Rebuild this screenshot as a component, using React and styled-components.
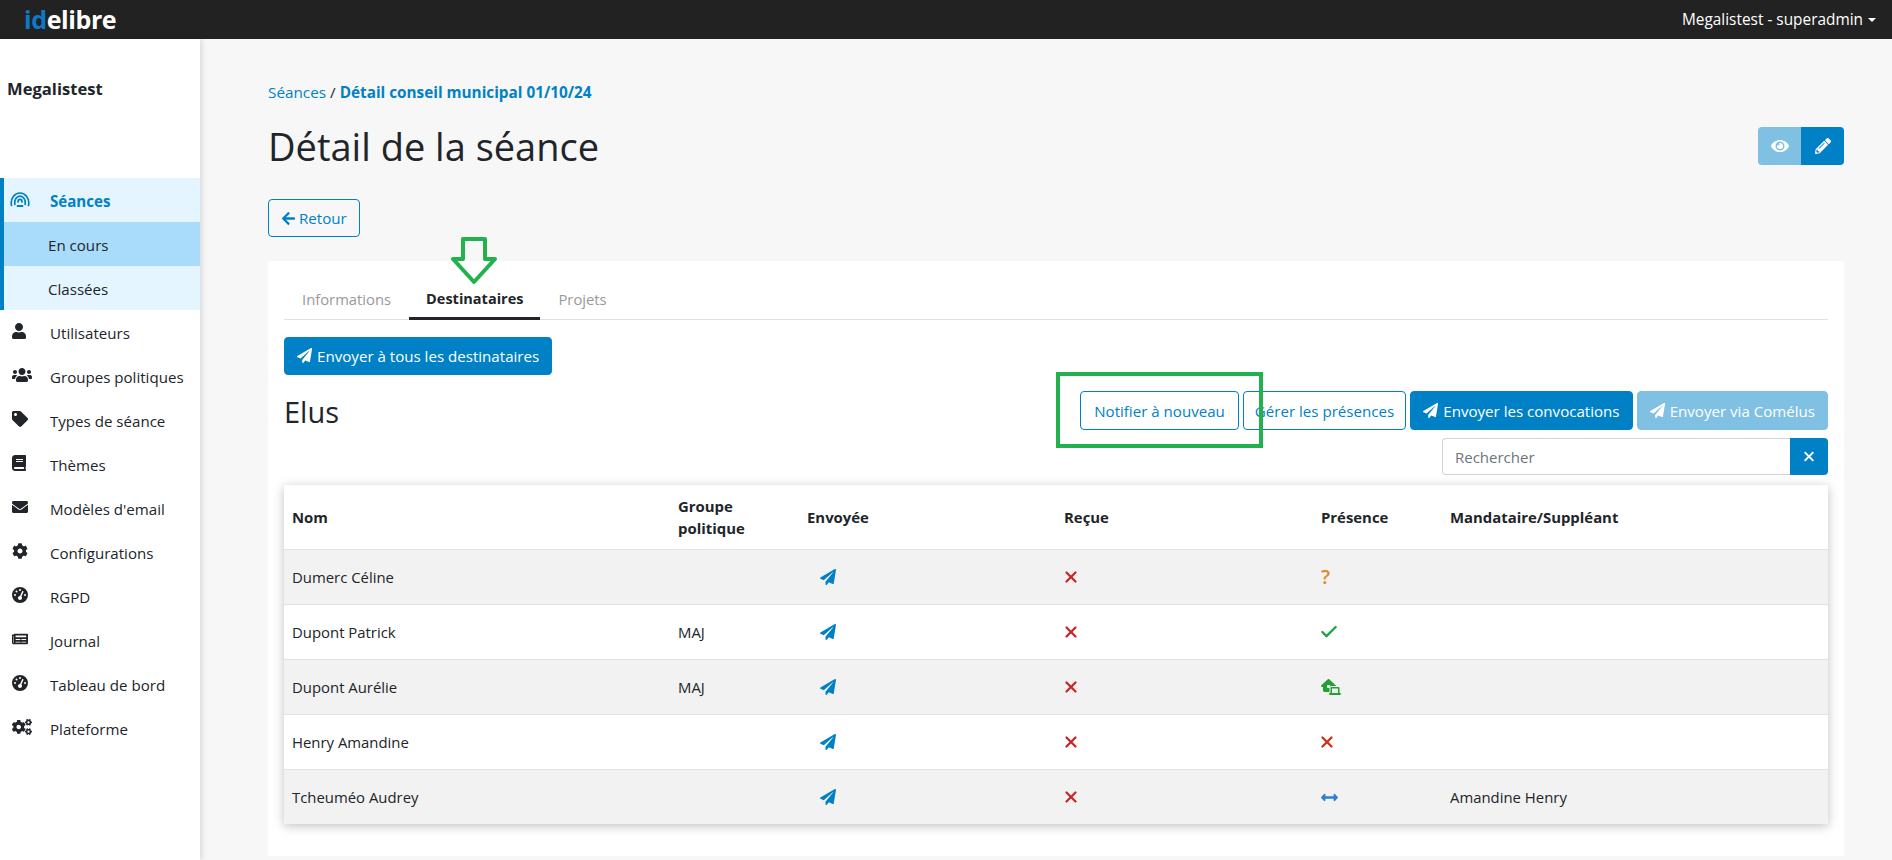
import styled, { createGlobalStyle } from 'styled-components';
import {
  FaUser, FaUsers, FaTag, FaBook, FaEnvelope, FaCog, FaNewspaper, FaCogs,
  FaEye, FaPencilAlt, FaArrowLeft, FaPaperPlane, FaArrowsAltH,
} from 'react-icons/fa';
import { FaHouseLaptop, FaGaugeHigh, FaXmark } from 'react-icons/fa6';
import { Check, X } from 'lucide-react';

const blue = '#0081c6';

const GlobalStyle = createGlobalStyle`
  html, body {
    margin: 0;
    height: 100%;
    overflow: hidden;
    background: #f7f7f7;
    color: #212529;
    font-family: "Open Sans", "Noto Sans", sans-serif;
    font-size: 15px;
  }
  * { box-sizing: border-box; }
`;

const Page = styled.div`
  position: relative;
  height: 860px;
  display: flex;
  flex-direction: column;
`;

const TopBar = styled.header`
  height: 39px;
  flex: none;
  background: #222;
  display: flex;
  align-items: center;
  justify-content: space-between;
  padding: 0 16px 0 24px;
  color: #fff;
`;

const Logo = styled.div`
  font-size: 25px;
  font-weight: 700;
  letter-spacing: -0.4px;
  line-height: 1;
  span { color: #0f78c8; }
`;

const UserMenu = styled.div`
  display: flex;
  align-items: center;
  gap: 5px;
  font-size: 15.4px;
  &::after {
    content: '';
    border-top: 4.5px solid #fff;
    border-left: 4.5px solid transparent;
    border-right: 4.5px solid transparent;
  }
`;

const Body = styled.div`
  flex: 1;
  display: flex;
  min-height: 0;
`;

const Sidebar = styled.aside`
  width: 200px;
  flex: none;
  background: #fff;
  box-shadow: 2px 0 6px rgba(0, 0, 0, 0.12);
  padding-top: 39px;
`;

const Structure = styled.div`
  font-weight: 700;
  font-size: 16.6px;
  padding-left: 7px;
  height: 100px;
  line-height: 22px;
`;

const NavGroup = styled.div`
  border-left: 4px solid ${blue};
  background: #e4f5ff;
`;

const NavItem = styled.div`
  height: 44px;
  display: flex;
  align-items: center;
  padding-top: 1px;
  padding-left: ${(p) => (p.$sub ? 44 : 12)}px;
  background: ${(p) => (p.$current ? '#a9dcfb' : 'transparent')};
  color: ${(p) => (p.$active ? blue : '#212529')};
  font-weight: ${(p) => (p.$active ? 700 : 400)};
  font-size: 15.1px;
  ${NavGroup} & { padding-left: ${(p) => (p.$sub ? 44 : 6)}px; }
`;

const NavIcon = styled.span`
  width: 38px;
  flex: none;
  display: flex;
  align-items: center;
  svg { width: ${(p) => p.$w || 16}px; height: 16px; margin-top: -3px; }
  ${NavGroup} & { width: 40px; svg { color: ${blue}; width: 20px; height: 15px; } }
`;

const Main = styled.main`
  flex: 1;
  min-width: 0;
  padding: 43px 48px 0 68px;
`;

const Breadcrumb = styled.div`
  font-size: 15.3px;
  line-height: 20px;
  color: ${blue};
  i { color: #212529; font-style: normal; }
  b { font-weight: 700; }
`;

const TitleRow = styled.div`
  display: flex;
  justify-content: space-between;
  align-items: center;
  margin-top: 20px;
  height: 48px;
`;

const Title = styled.h1`
  margin: 0;
  font-size: 38px;
  font-weight: 400;
  line-height: 48px;
`;

const IconGroup = styled.div`
  display: flex;
`;

const IconButton = styled.button`
  width: 43px;
  height: 38px;
  border: none;
  color: #fff;
  display: flex;
  align-items: center;
  justify-content: center;
  background: ${(p) => (p.$muted ? '#80c0e3' : blue)};
  border-radius: ${(p) => (p.$muted ? '4px 0 0 4px' : '0 4px 4px 0')};
  svg { width: 18px; height: 16px; }
`;

const Button = styled.button`
  height: ${(p) => p.$height || 39}px;
  padding: 0 ${(p) => p.$pad || 12}px;
  border: 1px solid ${(p) => (p.$muted ? '#80c0e3' : blue)};
  border-radius: 4px;
  background: ${(p) => (p.$outline ? '#fff' : p.$muted ? '#80c0e3' : blue)};
  color: ${(p) => (p.$outline ? blue : '#fff')};
  font-family: inherit;
  font-size: 15.1px;
  display: inline-flex;
  align-items: center;
  gap: 5px;
  white-space: nowrap;
`;

const BackButton = styled(Button)`
  background: transparent;
  margin-top: 29px;
  gap: 3px;
`;

const Card = styled.section`
  margin-top: 24px;
  height: 595px;
  background: #fff;
  padding: 16px;
`;

const Tabs = styled.nav`
  display: flex;
  height: 43px;
  border-bottom: 1px solid #dee2e6;
`;

const Tab = styled.div`
  height: 43px;
  padding: 0 ${(p) => (p.$active ? 17 : 18)}px;
  display: flex;
  align-items: center;
  font-size: ${(p) => (p.$active ? 14.5 : 14.8)}px;
  font-weight: ${(p) => (p.$active ? 700 : 400)};
  color: ${(p) => (p.$active ? '#212529' : '#999')};
  border-bottom: ${(p) => (p.$active ? '3px solid #212529' : 'none')};
  padding-top: ${(p) => (p.$active ? 3 : 0)}px;
`;

const SendAll = styled.div`
  margin-top: 17px;
  display: flex;
`;

const ListHead = styled.div`
  display: flex;
  justify-content: space-between;
  margin-top: 16px;
`;

const ListTitle = styled.h2`
  margin: 0;
  font-size: 29px;
  font-weight: 400;
  line-height: 42px;
`;

const Actions = styled.div`
  display: flex;
  flex-direction: column;
  align-items: flex-end;
  gap: 8px;
`;

const ActionRow = styled.div`
  display: flex;
  gap: 4px;
`;

const SearchRow = styled.div`
  display: flex;
  width: 386px;
  height: 37px;
`;

const SearchInput = styled.input`
  flex: 1;
  min-width: 0;
  border: 1px solid #ced4da;
  border-right: none;
  border-radius: 4px 0 0 4px;
  padding: 0 12px;
  font-family: inherit;
  font-size: 15px;
  &::placeholder { color: #6c757d; }
`;

const ClearButton = styled.button`
  width: 38px;
  border: none;
  background: ${blue};
  color: #fff;
  border-radius: 0 4px 4px 0;
  display: flex;
  align-items: center;
  justify-content: center;
  svg { width: 12px; height: 15px; }
`;

const Table = styled.table`
  width: 100%;
  margin-top: 10px;
  border-collapse: collapse;
  table-layout: fixed;
  box-shadow: 0 2px 10px rgba(0, 0, 0, 0.25);
  font-size: 14.9px;
`;

const Col = styled.col`
  width: ${(p) => p.$w}px;
`;

const Th = styled.th`
  height: 64px;
  padding: 0 8px;
  text-align: left;
  font-weight: 700;
  line-height: 22px;
`;

const Row = styled.tr`
  height: 55px;
  background: ${(p) => (p.$striped ? '#f2f2f2' : '#fff')};
  border-top: 1px solid #dee2e6;
`;

const Td = styled.td`
  padding: 0 8px;
`;

const StatusIcon = styled.span`
  display: inline-flex;
  align-items: center;
  color: ${(p) => p.$color};
  margin-left: ${(p) => p.$shift || 0}px;
  vertical-align: middle;
  svg { margin-top: -3px; }
  ${(p) => p.$w && `svg { width: ${p.$w}px; height: ${p.$h}px; }`}
`;

const QuestionMark = styled.span`
  color: #e08a2e;
  font-size: 20px;
  font-weight: 600;
  line-height: 1;
  vertical-align: middle;
`;

const HighlightBox = styled.div`
  position: absolute;
  left: 1056px;
  top: 372px;
  width: 207px;
  height: 76px;
  border: 4px solid #22b14c;
  pointer-events: none;
`;

const ArrowMark = styled.svg`
  position: absolute;
  left: 450px;
  top: 237px;
  width: 48px;
  height: 48px;
`;

// no package has this broadcast mark, so it is drawn
function BroadcastIcon() {
  return (
    <svg viewBox="0 0 20 15" fill="none" stroke="currentColor" strokeWidth="1.7" strokeLinecap="round">
      <path d="M1.5 13.5 C0 6 5 1 10 1 C15 1 20 6 18.5 13.5" />
      <path d="M4.8 12.5 C3.8 7.5 7 4.2 10 4.2 C13 4.2 16.2 7.5 15.2 12.5" />
      <path d="M8 10 C8 8.5 9 7.4 10 7.4 C11 7.4 12 8.5 12 10" />
      <path d="M7.5 14 H12.5" strokeWidth="1.9" />
    </svg>
  );
}

const menu = [
  [FaUser, 'Utilisateurs', 14],
  [FaUsers, 'Groupes politiques', 20],
  [FaTag, 'Types de séance', 16],
  [FaBook, 'Thèmes', 14],
  [FaEnvelope, "Modèles d'email", 16],
  [FaCog, 'Configurations', 16],
  [FaGaugeHigh, 'RGPD', 16],
  [FaNewspaper, 'Journal', 16],
  [FaGaugeHigh, 'Tableau de bord', 16],
  [FaCogs, 'Plateforme', 20],
];

const presence = {
  unknown: <QuestionMark>?</QuestionMark>,
  yes: <StatusIcon $color="#22a245" $shift={-2}><Check size={20} strokeWidth={2.8} /></StatusIcon>,
  remote: <StatusIcon $color="#22a035" $w={20} $h={16}><FaHouseLaptop /></StatusIcon>,
  no: <StatusIcon $color="#c8321f" $shift={-3}><X size={18} strokeWidth={3} /></StatusIcon>,
  proxy: <StatusIcon $color="#2f7fd1" $w={17} $h={17}><FaArrowsAltH /></StatusIcon>,
};

const people = [
  { name: 'Dumerc Céline', group: '', status: 'unknown', proxy: '' },
  { name: 'Dupont Patrick', group: 'MAJ', status: 'yes', proxy: '' },
  { name: 'Dupont Aurélie', group: 'MAJ', status: 'remote', proxy: '' },
  { name: 'Henry Amandine', group: '', status: 'no', proxy: '' },
  { name: 'Tcheuméo Audrey', group: '', status: 'proxy', proxy: 'Amandine Henry' },
];

export default function App() {
  return (
    <Page>
      <GlobalStyle />
      <TopBar>
        <Logo><span>id</span>elibre</Logo>
        <UserMenu>Megalistest - superadmin</UserMenu>
      </TopBar>
      <Body>
        <Sidebar>
          <Structure>Megalistest</Structure>
          <NavGroup>
            <NavItem $active><NavIcon><BroadcastIcon /></NavIcon>Séances</NavItem>
            <NavItem $sub $current>En cours</NavItem>
            <NavItem $sub>Classées</NavItem>
          </NavGroup>
          {menu.map(([Icon, label, w]) => (
            <NavItem key={label}><NavIcon $w={w}><Icon /></NavIcon>{label}</NavItem>
          ))}
        </Sidebar>
        <Main>
          <Breadcrumb>Séances <i>/</i> <b>Détail conseil municipal 01/10/24</b></Breadcrumb>
          <TitleRow>
            <Title>Détail de la séance</Title>
            <IconGroup>
              <IconButton $muted><FaEye /></IconButton>
              <IconButton><FaPencilAlt /></IconButton>
            </IconGroup>
          </TitleRow>
          <BackButton $outline $height={38}><FaArrowLeft size={15} /> Retour</BackButton>
          <Card>
            <Tabs>
              <Tab>Informations</Tab>
              <Tab $active>Destinataires</Tab>
              <Tab>Projets</Tab>
            </Tabs>
            <SendAll>
              <Button $height={38}><FaPaperPlane /> Envoyer à tous les destinataires</Button>
            </SendAll>
            <ListHead>
              <ListTitle>Elus</ListTitle>
              <Actions>
                <ActionRow>
                  <Button $outline $pad={13}>Notifier à nouveau</Button>
                  <Button $outline $pad={11}>Gérer les présences</Button>
                  <Button><FaPaperPlane /> Envoyer les convocations</Button>
                  <Button $muted><FaPaperPlane /> Envoyer via Comélus</Button>
                </ActionRow>
                <SearchRow>
                  <SearchInput placeholder="Rechercher" readOnly />
                  <ClearButton><FaXmark /></ClearButton>
                </SearchRow>
              </Actions>
            </ListHead>
            <Table>
              <colgroup>
                <Col $w={386} /><Col $w={129} /><Col $w={257} /><Col $w={257} /><Col $w={129} /><Col $w={386} />
              </colgroup>
              <thead>
                <tr>
                  <Th>Nom</Th>
                  <Th>Groupe politique</Th>
                  <Th>Envoyée</Th>
                  <Th>Reçue</Th>
                  <Th>Présence</Th>
                  <Th>Mandataire/Suppléant</Th>
                </tr>
              </thead>
              <tbody>
                {people.map((p, i) => (
                  <Row key={p.name} $striped={i % 2 === 0}>
                    <Td>{p.name}</Td>
                    <Td>{p.group}</Td>
                    <Td><StatusIcon $color={blue} $w={16} $h={16} $shift={13}><FaPaperPlane /></StatusIcon></Td>
                    <Td><StatusIcon $color="#c62828" $shift={-2}><X size={18} strokeWidth={3} /></StatusIcon></Td>
                    <Td>{presence[p.status]}</Td>
                    <Td>{p.proxy}</Td>
                  </Row>
                ))}
              </tbody>
            </Table>
          </Card>
        </Main>
      </Body>
      <HighlightBox />
      <ArrowMark viewBox="0 0 48 48">
        <path d="M13 2 H35 V22 H45 L24 45 L3 22 H13 Z" fill="none" stroke="#22b14c" strokeWidth="4" strokeLinejoin="round" />
      </ArrowMark>
    </Page>
  );
}
